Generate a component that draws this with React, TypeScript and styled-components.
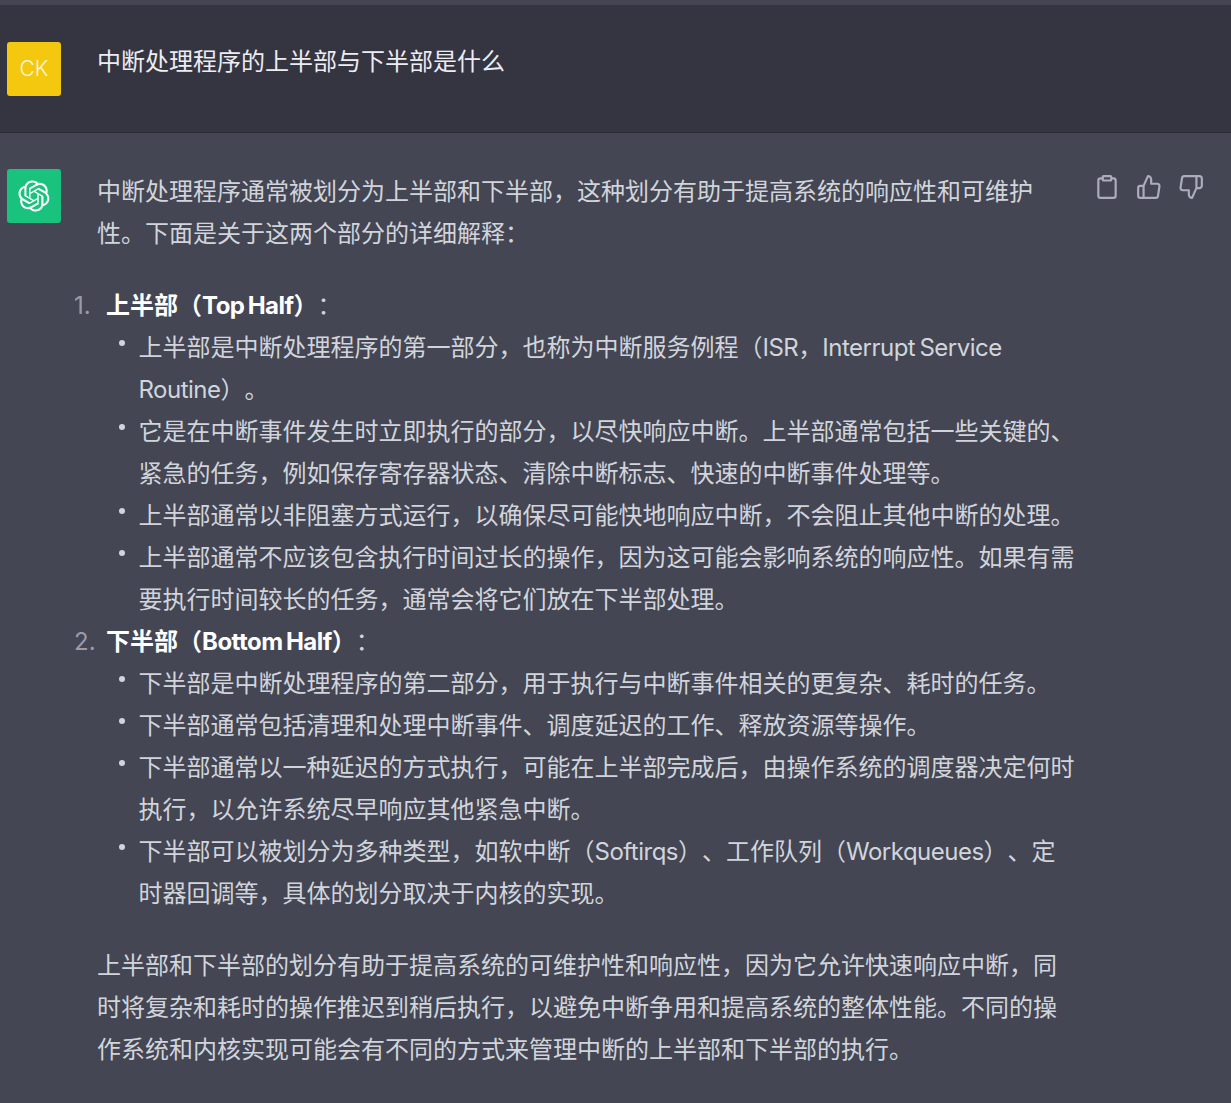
import * as React from "react";
import styled, { createGlobalStyle } from "styled-components";

const GlobalStyle = createGlobalStyle`
  html, body {
    margin: 0;
    padding: 0;
    background: #444654;
  }
  body {
    font-family: Inter, "Noto Sans CJK SC", sans-serif;
    font-size: 24px;
    line-height: 42px;
    color: #d1d5db;
    text-spacing-trim: space-all;
  }
`;

const Page = styled.div`
  width: 1231px;
  height: 1103px;
  overflow: hidden;
  padding-top: 5px;
  box-sizing: border-box;
`;

const Row = styled.div<{ $user?: boolean }>`
  display: flex;
  align-items: flex-start;
  background: ${(p) => (p.$user ? "#343541" : "#444654")};
  border-bottom: ${(p) => (p.$user ? "1px solid #2b2c35" : "none")};
  height: ${(p) => (p.$user ? "128px" : "auto")};
  padding: ${(p) => (p.$user ? "37px" : "36px")} 0 0 7px;
  box-sizing: border-box;
`;

const Avatar = styled.div<{ $bg: string }>`
  flex: none;
  width: 54px;
  height: 54px;
  border-radius: 3px;
  background: ${(p) => p.$bg};
  color: rgba(255, 255, 255, 0.85);
  display: flex;
  align-items: center;
  justify-content: center;
  font-size: 21px;
  font-weight: 300;
`;

const Content = styled.div`
  flex: none;
  width: 981px;
  margin-left: 36px;
`;

const UserText = styled.div`
  color: #ececf1;
  margin-top: -1px;
`;

const AssistantText = styled(Content)`
  margin-top: 2px;
`;

const Paragraph = styled.p<{ $last?: boolean }>`
  margin: ${(p) => (p.$last ? "30px" : "0")} 0 ${(p) => (p.$last ? "0" : "30px")};
`;

const Numbered = styled.ol`
  margin: 0 0 0 -1px;
  padding: 0 0 0 10px;
  list-style: none;
`;

const NumberedItem = styled.li`
  position: relative;
`;

const Marker = styled.span`
  position: absolute;
  left: -32px;
  top: 0;
  color: #9a9bab;
`;

const Heading = styled.strong`
  font-weight: 700;
  color: #fff;
`;

// Latin runs sit tighter than Inter's defaults, closer to the original face
const Latin = styled.span`
  letter-spacing: -0.5px;
  word-spacing: -2px;
`;

const Bullets = styled.ul`
  margin: 0;
  padding: 0 0 0 32.5px;
  list-style: none;
`;

const BulletItem = styled.li`
  position: relative;
  &::before {
    content: "";
    position: absolute;
    left: -20px;
    top: 13px;
    width: 6px;
    height: 6px;
    border-radius: 50%;
    background: #d1d5db;
  }
`;

const Actions = styled.div`
  display: flex;
  gap: 16px;
  margin: 5px 0 0 16px;
  color: #acacbe;
`;

const IconSvg = styled.svg`
  display: block;
  width: 26px;
  height: 26px;
  fill: none;
  stroke: currentColor;
  stroke-width: 2;
  stroke-linecap: round;
  stroke-linejoin: round;
`;

const OPENAI_PATH =
  "M37.5324 16.8707C37.9808 15.5241 38.1363 14.0974 37.9886 12.6859C37.8409 11.2744 37.3934 9.91076 36.676 8.68622C35.6126 6.83404 33.9882 5.3676 32.0373 4.4985C30.0864 3.62941 27.9098 3.40259 25.8215 3.85078C24.8796 2.7893 23.7219 1.94125 22.4257 1.36341C21.1295 0.785575 19.7249 0.491269 18.3058 0.500197C16.1708 0.495044 14.0893 1.16803 12.3614 2.42214C10.6335 3.67624 9.34853 5.44666 8.6917 7.47815C7.30085 7.76286 5.98686 8.3414 4.8377 9.17505C3.68854 10.0087 2.73073 11.0782 2.02839 12.312C0.956464 14.1591 0.498905 16.2988 0.721698 18.4228C0.944492 20.5467 1.83612 22.5449 3.268 24.1293C2.81966 25.4759 2.66413 26.9026 2.81182 28.3141C2.95951 29.7256 3.40701 31.0892 4.12437 32.3138C5.18791 34.1659 6.8123 35.6322 8.76321 36.5013C10.7141 37.3704 12.8907 37.5973 14.9789 37.1492C15.9208 38.2107 17.0786 39.0587 18.3747 39.6366C19.6709 40.2144 21.0755 40.5087 22.4946 40.4998C24.6307 40.5054 26.7133 39.8321 28.4418 38.5772C30.1704 37.3223 31.4556 35.5506 32.1119 33.5179C33.5027 33.2332 34.8167 32.6547 35.9659 31.821C37.115 30.9874 38.0728 29.9178 38.7752 28.684C39.8458 26.8371 40.3023 24.6979 40.0789 22.5748C39.8556 20.4517 38.9639 18.4544 37.5324 16.8707ZM22.4978 37.8849C20.7443 37.8874 19.0459 37.2733 17.6994 36.1501C17.7601 36.117 17.8666 36.0586 17.936 36.0161L25.9004 31.4156C26.1003 31.3019 26.2663 31.137 26.3813 30.9378C26.4964 30.7386 26.5563 30.5124 26.5549 30.2825V19.0542L29.9213 20.998C29.9389 21.0068 29.9541 21.0198 29.9656 21.0359C29.977 21.052 29.9842 21.0707 29.9867 21.0902V30.3889C29.9842 32.375 29.1946 34.2791 27.7909 35.6841C26.3872 37.0892 24.4838 37.8806 22.4978 37.8849ZM6.39227 31.0064C5.51397 29.4888 5.19742 27.7107 5.49804 25.9832C5.55718 26.0187 5.66048 26.0818 5.73461 26.1244L13.699 30.7248C13.8975 30.8408 14.1233 30.902 14.3532 30.902C14.583 30.902 14.8088 30.8408 15.0073 30.7248L24.731 25.1103V28.9979C24.7321 29.0177 24.7283 29.0376 24.7199 29.0556C24.7115 29.0736 24.6988 29.0893 24.6829 29.1012L16.6317 33.7497C14.9096 34.7416 12.8643 35.0097 10.9447 34.4954C9.02506 33.9811 7.38785 32.7263 6.39227 31.0064ZM4.29707 13.6194C5.17156 12.0998 6.55279 10.9364 8.19885 10.3327C8.19885 10.4013 8.19491 10.5228 8.19491 10.6071V19.808C8.19351 20.0378 8.25334 20.2638 8.36823 20.4629C8.48312 20.6619 8.64893 20.8267 8.84863 20.9404L18.5723 26.5542L15.206 28.4979C15.1894 28.5089 15.1703 28.5155 15.1505 28.5173C15.1307 28.5191 15.1107 28.516 15.0924 28.5082L7.04046 23.8557C5.32135 22.8601 4.06716 21.2235 3.55289 19.3046C3.03862 17.3858 3.30624 15.3413 4.29707 13.6194ZM31.955 20.0556L22.2312 14.4411L25.5976 12.4981C25.6142 12.4872 25.6333 12.4805 25.6531 12.4787C25.6729 12.4769 25.6928 12.4801 25.7111 12.4879L33.7631 17.1364C34.9967 17.849 36.0017 18.8982 36.6606 20.1613C37.3194 21.4244 37.6047 22.849 37.4832 24.2684C37.3617 25.6878 36.8382 27.0432 35.9743 28.1759C35.1103 29.3086 33.9415 30.1717 32.6047 30.6641C32.6047 30.5947 32.6047 30.4733 32.6047 30.3889V21.188C32.6066 20.9586 32.5474 20.7328 32.4332 20.5338C32.319 20.3348 32.154 20.1698 31.955 20.0556ZM35.3055 15.0128C35.2464 14.9765 35.1431 14.9142 35.069 14.8717L27.1045 10.2712C26.906 10.1554 26.6803 10.0943 26.4504 10.0943C26.2206 10.0943 25.9948 10.1554 25.7963 10.2712L16.0726 15.8858V11.9982C16.0715 11.9783 16.0753 11.9585 16.0837 11.9405C16.0921 11.9225 16.1048 11.9068 16.1207 11.8949L24.1719 7.25025C25.4053 6.53903 26.8121 6.19376 28.2299 6.25482C29.6477 6.31589 31.0204 6.78077 32.1895 7.59508C33.3586 8.40939 34.2765 9.53945 34.8362 10.8456C35.3959 12.1517 35.5747 13.5844 35.3755 14.9921L35.3055 15.0128ZM14.2424 21.9419L10.8752 19.9981C10.8576 19.9893 10.8423 19.9763 10.8309 19.9602C10.8195 19.9441 10.8122 19.9254 10.8098 19.9058V10.6071C10.8107 9.18295 11.2173 7.78848 11.9819 6.58696C12.7466 5.38544 13.8377 4.42659 15.1275 3.82264C16.4173 3.21869 17.8524 2.99464 19.2649 3.1767C20.6775 3.35876 22.0089 3.93941 23.1034 4.85067C23.0427 4.88379 22.937 4.94215 22.8668 4.98473L14.9024 9.58517C14.7025 9.69878 14.5366 9.86356 14.4215 10.0626C14.3065 10.2616 14.2466 10.4877 14.2479 10.7175L14.2424 21.9419ZM16.071 17.9991L20.4018 15.4978L24.7325 17.9975V22.9985L20.4018 25.4983L16.071 22.9985V17.9991Z";

const sections = [
  {
    title: "上半部（Top Half）",
    items: [
      "上半部是中断处理程序的第一部分，也称为中断服务例程（ISR，Interrupt Service Routine）。",
      "它是在中断事件发生时立即执行的部分，以尽快响应中断。上半部通常包括一些关键的、紧急的任务，例如保存寄存器状态、清除中断标志、快速的中断事件处理等。",
      "上半部通常以非阻塞方式运行，以确保尽可能快地响应中断，不会阻止其他中断的处理。",
      "上半部通常不应该包含执行时间过长的操作，因为这可能会影响系统的响应性。如果有需要执行时间较长的任务，通常会将它们放在下半部处理。",
    ],
  },
  {
    title: "下半部（Bottom Half）",
    items: [
      "下半部是中断处理程序的第二部分，用于执行与中断事件相关的更复杂、耗时的任务。",
      "下半部通常包括清理和处理中断事件、调度延迟的工作、释放资源等操作。",
      "下半部通常以一种延迟的方式执行，可能在上半部完成后，由操作系统的调度器决定何时执行，以允许系统尽早响应其他紧急中断。",
      "下半部可以被划分为多种类型，如软中断（Softirqs）、工作队列（Workqueues）、定时器回调等，具体的划分取决于内核的实现。",
    ],
  },
];

const withLatin = (text: string) =>
  text.split(/([A-Za-z][A-Za-z ]*)/).map((part, i) =>
    i % 2 ? <Latin key={i}>{part}</Latin> : part
  );

export default function App() {
  return (
    <Page>
      <GlobalStyle />
      <Row $user>
        <Avatar $bg="#f3c80f">CK</Avatar>
        <Content>
          <UserText>中断处理程序的上半部与下半部是什么</UserText>
        </Content>
      </Row>
      <Row>
        <Avatar $bg="#19c37d">
          <svg width="32" height="32" viewBox="0 0 41 41" fill="#fff">
            <path d={OPENAI_PATH} />
          </svg>
        </Avatar>
        <AssistantText>
          <Paragraph>
            中断处理程序通常被划分为上半部和下半部，这种划分有助于提高系统的响应性和可维护性。下面是关于这两个部分的详细解释：
          </Paragraph>
          <Numbered>
            {sections.map((s, i) => (
              <NumberedItem key={s.title}>
                <Marker>{i + 1}.</Marker>
                <Heading>{withLatin(s.title)}</Heading>：
                <Bullets>
                  {s.items.map((t) => (
                    <BulletItem key={t}>{withLatin(t)}</BulletItem>
                  ))}
                </Bullets>
              </NumberedItem>
            ))}
          </Numbered>
          <Paragraph $last>
            上半部和下半部的划分有助于提高系统的可维护性和响应性，因为它允许快速响应中断，同时将复杂和耗时的操作推迟到稍后执行，以避免中断争用和提高系统的整体性能。不同的操作系统和内核实现可能会有不同的方式来管理中断的上半部和下半部的执行。
          </Paragraph>
        </AssistantText>
        <Actions>
          <IconSvg viewBox="0 0 24 24">
            <path d="M16 4h2a2 2 0 0 1 2 2v14a2 2 0 0 1-2 2H6a2 2 0 0 1-2-2V6a2 2 0 0 1 2-2h2" />
            <rect x="8" y="2" width="8" height="4" rx="1" ry="1" />
          </IconSvg>
          <IconSvg viewBox="0 0 24 24">
            <path d="M14 9V5a3 3 0 0 0-3-3l-4 9v11h11.28a2 2 0 0 0 2-1.7l1.38-9a2 2 0 0 0-2-2.3zM7 22H4a2 2 0 0 1-2-2v-7a2 2 0 0 1 2-2h3" />
          </IconSvg>
          <IconSvg viewBox="0 0 24 24">
            <path d="M10 15v4a3 3 0 0 0 3 3l4-9V2H5.72a2 2 0 0 0-2 1.7l-1.38 9a2 2 0 0 0 2 2.3zm7-13h2.67A2.31 2.31 0 0 1 22 4v7a2.31 2.31 0 0 1-2.33 2H17" />
          </IconSvg>
        </Actions>
      </Row>
    </Page>
  );
}
